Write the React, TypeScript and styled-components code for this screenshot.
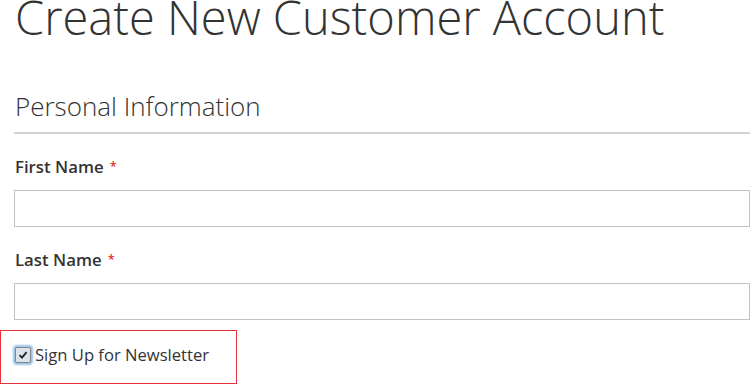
import React from "react";
import styled, { createGlobalStyle } from "styled-components";

const GlobalStyle = createGlobalStyle`
  html, body {
    margin: 0;
    padding: 0;
    background: #ffffff;
    overflow: hidden;
  }
  body {
    font-family: "Open Sans", "Liberation Sans", sans-serif;
    color: #333333;
  }
`;

const App: React.FC = () => {
  return (
    <Page>
      <GlobalStyle />
      <Title>Create New Customer Account</Title>
      <Fieldset>
        <Legend>Personal Information</Legend>
        <Field>
          <Label>
            First Name <Star>*</Star>
          </Label>
          <Input type="text" />
        </Field>
        <Field>
          <Label>
            Last Name <Star>*</Star>
          </Label>
          <Input type="text" />
        </Field>
        <Newsletter>
          <CheckBox>
            <svg width="10" height="10" viewBox="0 0 10 10">
              <path d="M1.5 5.2 L4 7.6 L8.6 2.2" fill="none" stroke="#222" strokeWidth="1.8" />
            </svg>
          </CheckBox>
          <CheckText>Sign Up for Newsletter</CheckText>
        </Newsletter>
      </Fieldset>
    </Page>
  );
};

export default App;

const Page = styled.div`
  width: 750px;
  height: 384px;
  box-sizing: border-box;
  padding-left: 14px;
  overflow: hidden;
`;

const Title = styled.h1`
  margin: 0 0 0 1px;
  height: 35px;
  font-size: 47px;
  line-height: 35px;
  font-weight: 300;
  color: #333333;
  white-space: nowrap;
`;

const Fieldset = styled.div`
  display: flex;
  flex-direction: column;
  margin-top: 53px;
`;

const Legend = styled.div`
  font-size: 26px;
  font-weight: 300;
  line-height: 36px;
  padding-left: 1px;
  padding-bottom: 8px;
  border-bottom: 2px solid #d1d1d1;
  color: #333333;
`;

const Field = styled.div`
  display: flex;
  flex-direction: column;
  margin-top: 22px;
`;

const Label = styled.label`
  font-size: 16.8px;
  font-weight: 600;
  line-height: 22px;
  padding-left: 1px;
  margin-bottom: 12px;
  color: #333333;
`;

const Star = styled.span`
  color: #e02b27;
  font-size: 12px;
  margin-left: 2px;
  vertical-align: 2px;
`;

const Input = styled.input`
  display: block;
  box-sizing: border-box;
  width: 736px;
  height: 37px;
  margin: 0;
  padding: 0;
  border: 1px solid #c2c2c2;
  background: #ffffff;
  outline: none;
`;

const Newsletter = styled.div`
  display: flex;
  align-items: center;
  gap: 4px;
  width: 237px;
  height: 54px;
  box-sizing: border-box;
  margin-top: 10px;
  margin-left: -14px;
  padding-left: 14px;
  padding-bottom: 4px;
  border: 1px solid #e8323c;
`;

const CheckBox = styled.span`
  display: flex;
  align-items: center;
  justify-content: center;
  width: 14px;
  height: 14px;
  border: 1px solid #7d8591;
  border-radius: 2px;
  background: #dde3ea;
  box-shadow: 0 0 2px 2px #9cc3e6;
`;

const CheckText = styled.span`
  font-size: 16.6px;
  line-height: 20px;
  color: #333333;
`;
